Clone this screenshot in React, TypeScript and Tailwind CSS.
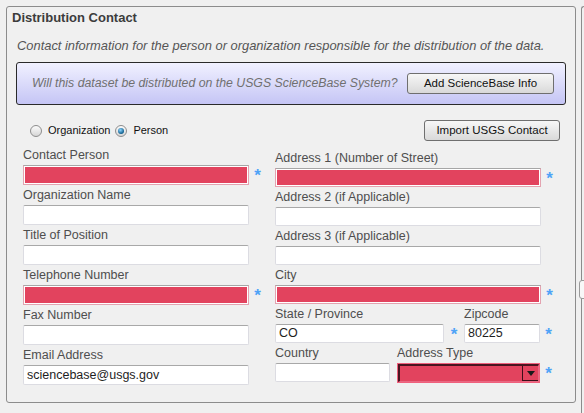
import React from "react";

const Star = ({ w = "w-[17px]" }: { w?: string }) => (
  <div className={`${w} shrink-0 flex justify-center text-[#4fa3f7] font-bold text-[17px] leading-[17px] pt-[2px]`}>*</div>
);

const TextInput = ({ w, h, value }: { w: string; h: string; value?: string }) => (
  <div
    className={`${w} ${h} shrink-0 bg-white border border-[#dcdce2] border-t-[#a8a8a8] rounded-[2px] flex items-center pl-[3px] text-[12.5px] text-[#1e1e1e] leading-none`}
  >
    {value}
  </div>
);

const RedInput = ({ w, h }: { w: string; h: string }) => (
  <div className={`${w} ${h} shrink-0 border border-[#e3a3b0] border-t-[#a6a6a6] bg-white p-[1px]`}>
    <div className="w-full h-full bg-[#e2435e]" />
  </div>
);

const Label = ({ children, w }: { children: React.ReactNode; w?: string }) => (
  <div className={`${w ?? ""} h-[16px] leading-[16px] text-[12.5px] text-[#4e4e4e] whitespace-nowrap`}>{children}</div>
);

const Radio = ({ checked }: { checked?: boolean }) => (
  <div className="w-[12px] h-[12px] rounded-full border border-[#8d8d8d] bg-linear-to-b from-[#fbfbfb] to-[#d6d6d6] flex items-center justify-center shrink-0">
    {checked && (
      <div className="w-[6px] h-[6px] rounded-full bg-[radial-gradient(circle_at_40%_35%,#8fd6ff,#0d5d8c_70%)]" />
    )}
  </div>
);

const Button = ({ children, w }: { children: React.ReactNode; w: string }) => (
  <div
    className={`${w} h-[21px] shrink-0 rounded-[3px] border border-[#6f6f6f] bg-linear-to-b from-[#f7f7f7] to-[#d9d9d9] flex items-center justify-center text-[11.5px] text-[#111] whitespace-nowrap`}
  >
    {children}
  </div>
);

export default function App() {
  return (
    <div className="w-[584px] h-[413px] bg-[#f0f0f0] flex pt-[6px] pl-[6px] gap-[5px] overflow-hidden font-['Liberation_Sans',Arial,sans-serif]">
      <div className="w-[570px] h-[397px] shrink-0 border border-[#8c8c8c] rounded-[3px] flex flex-col">
        <div className="pl-[5px] pt-[3px] text-[13px] font-bold leading-[16px] text-[#3c3c3c]">Distribution Contact</div>
        <div className="mt-[12px] pl-[10px] italic text-[12.9px] leading-[16px] text-[#555] whitespace-nowrap">
          Contact information for the person or organization responsible for the distribution of the data.
        </div>
        <div className="mt-[8px] ml-[9px] w-[550px] h-[43px] border border-[#2a2a2a] rounded-[3px] bg-linear-to-b from-[#f1f1ff] to-[#c5c5f5] flex items-center justify-between pl-[15px] pr-[11px]">
          <div className="italic text-[12.3px] text-[#707070] whitespace-nowrap">Will this dataset be distributed on the USGS ScienceBase System?</div>
          <Button w="w-[147px]">Add ScienceBase Info</Button>
        </div>
        <div className="mt-[15px] h-[21px] flex items-center justify-between pl-[23px] pr-[15px]">
          <div className="flex items-center text-[11px] text-[#111]">
            <Radio />
            <span className="ml-[6px]">Organization</span>
            <div className="ml-[5px]">
              <Radio checked />
            </div>
            <span className="ml-[6px]">Person</span>
          </div>
          <Button w="w-[136px]">Import USGS Contact</Button>
        </div>
        <div className="flex pl-[16px]">
          <div className="w-[252px] mt-[6px] flex flex-col gap-[2px]">
            {[
              { l: "Contact Person", red: true, star: true },
              { l: "Organization Name" },
              { l: "Title of Position" },
              { l: "Telephone Number", red: true, star: true },
              { l: "Fax Number" },
              { l: "Email Address", v: "sciencebase@usgs.gov" },
            ].map((f) => (
              <div key={f.l} className="flex flex-col gap-[2px]">
                <Label>{f.l}</Label>
                <div className="flex">
                  {f.red ? <RedInput w="w-[226px]" h="h-[20px]" /> : <TextInput w="w-[226px]" h="h-[20px]" value={f.v} />}
                  {f.star && <Star />}
                </div>
              </div>
            ))}
          </div>
          <div className="mt-[9px] flex flex-col gap-[2px]">
            {[
              { l: "Address 1 (Number of Street)", red: true, star: true },
              { l: "Address 2 (if Applicable)" },
              { l: "Address 3 (if Applicable)" },
              { l: "City", red: true, star: true },
            ].map((f) => (
              <div key={f.l} className="flex flex-col gap-[2px]">
                <Label>{f.l}</Label>
                <div className="flex">
                  {f.red ? <RedInput w="w-[266px]" h="h-[19px]" /> : <TextInput w="w-[266px]" h="h-[19px]" />}
                  {f.star && <Star />}
                </div>
              </div>
            ))}
            <div className="flex flex-col gap-[2px]">
              <div className="flex">
                <Label w="w-[189px]">State / Province</Label>
                <Label>Zipcode</Label>
              </div>
              <div className="flex">
                <TextInput w="w-[169px]" h="h-[19px]" value="CO" />
                <Star w="w-[20px]" />
                <TextInput w="w-[76px]" h="h-[19px]" value="80225" />
                <Star />
              </div>
            </div>
            <div className="flex flex-col gap-[2px]">
              <div className="flex">
                <Label w="w-[122px]">Country</Label>
                <Label>Address Type</Label>
              </div>
              <div className="flex">
                <TextInput w="w-[115px]" h="h-[19px]" />
                <div className="ml-[7px] w-[143px] h-[20px] shrink-0 border border-[#f0607c] bg-[#e2435e]">
                  <div className="w-full h-full border-t-2 border-l-2 border-[#4a1420] border-r border-b border-r-[#e86882] border-b-[#e86882] flex justify-end">
                    <div className="w-[16px] h-full border-l border-b border-[#3a0e18] flex items-center justify-center">
                      <svg width="8" height="5" viewBox="0 0 8 5">
                        <path d="M0 0 H8 L4 5 Z" fill="#1a1a1a" />
                      </svg>
                    </div>
                  </div>
                </div>
                <Star />
              </div>
            </div>
          </div>
        </div>
      </div>
      <div className="w-[12px] h-[420px] shrink-0 border-l border-t border-[#8c8c8c] rounded-tl-[3px] flex flex-col">
        <div className="mt-[273px] ml-[-3px] w-[14px] h-[19px] bg-[#f8f8f8] border border-[#9a9a9a] rounded-l-[3px]" />
      </div>
    </div>
  );
}
